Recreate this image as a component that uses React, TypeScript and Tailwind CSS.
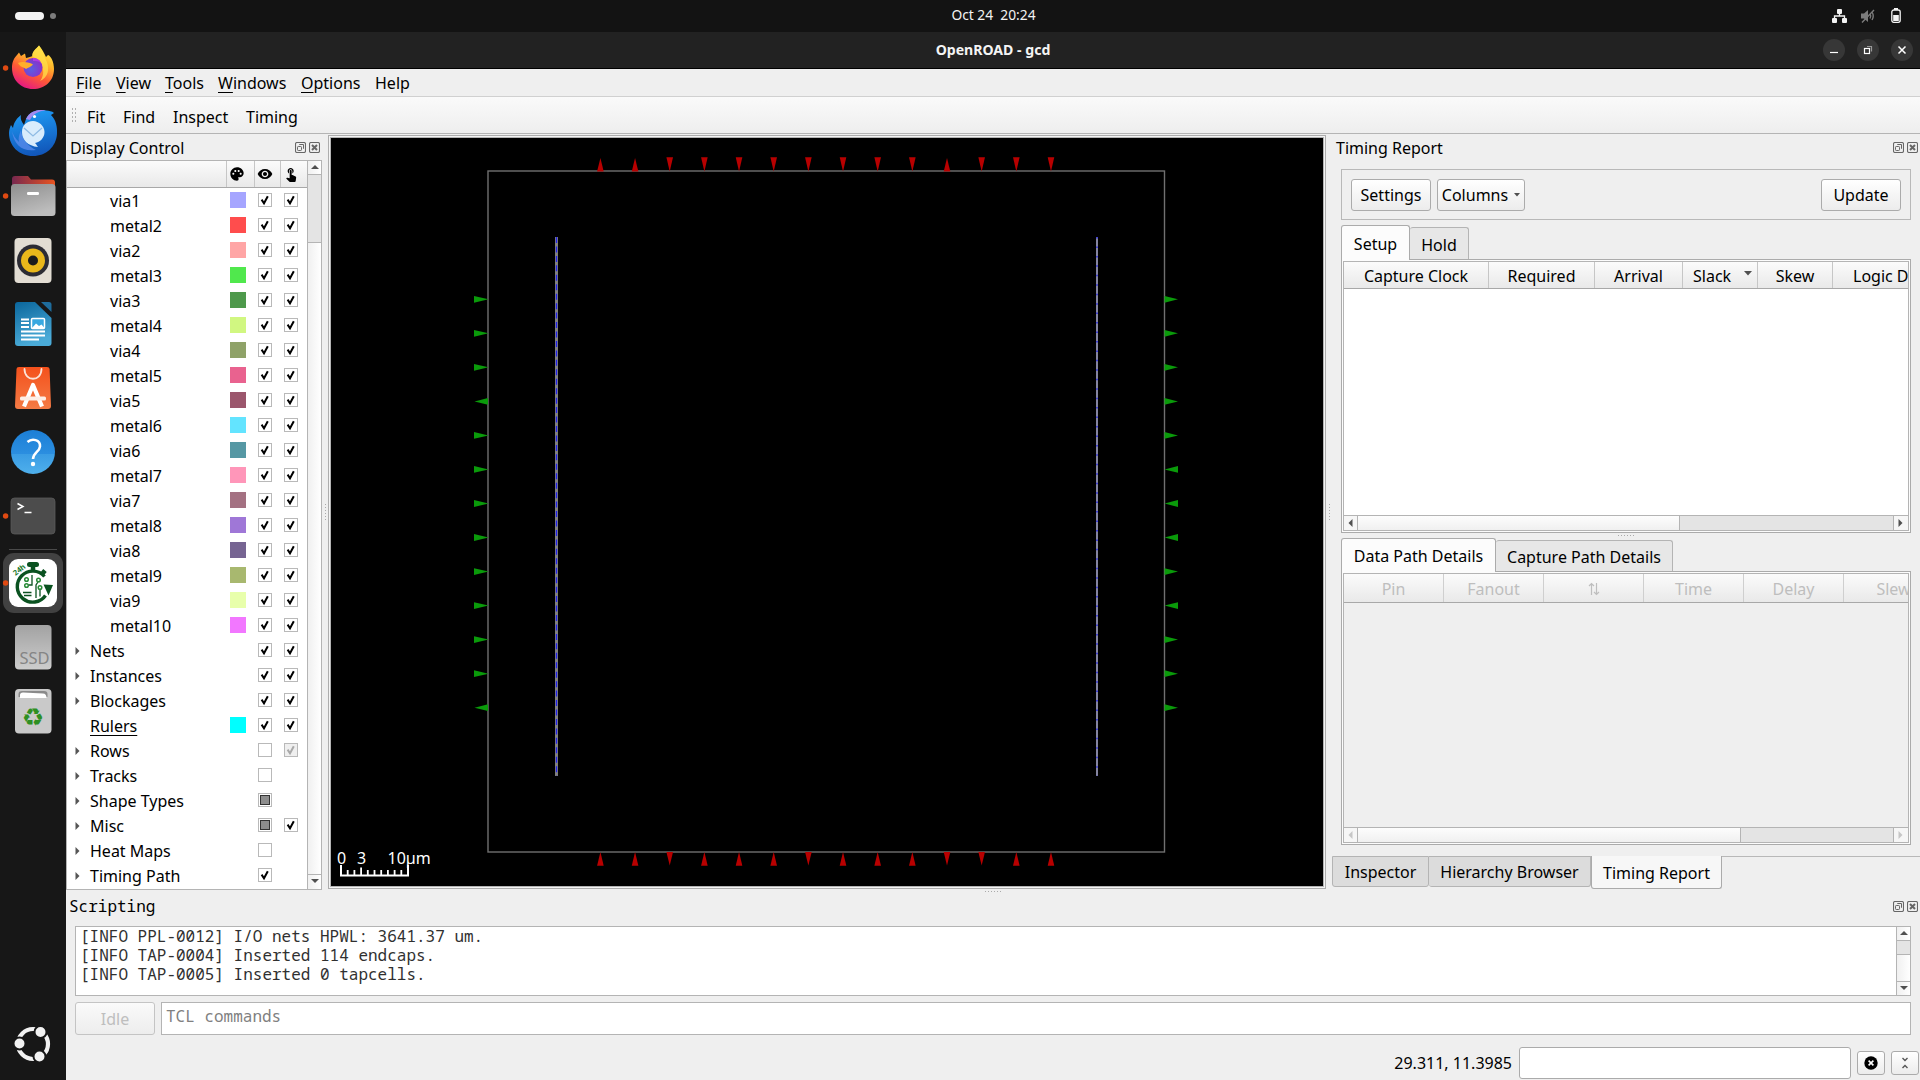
import React from "react";
import { MdPalette, MdVisibility, MdTouchApp } from "react-icons/md";

type CheckState = "on" | "off" | "partial" | "disabled" | "none";

interface TreeRow {
  label: string;
  color?: string;
  child?: boolean;
  arrow?: boolean;
  underline?: boolean;
  visible: CheckState;
  selectable: CheckState;
}

const layer = (label: string, color: string): TreeRow => ({
  label,
  color,
  child: true,
  visible: "on",
  selectable: "on",
});

const group = (label: string, visible: CheckState, selectable: CheckState): TreeRow => ({
  label,
  arrow: true,
  visible,
  selectable,
});

const ROWS: TreeRow[] = [
  layer("via1", "#a5a5ff"),
  layer("metal2", "#ff4d4d"),
  layer("via2", "#ffa5a5"),
  layer("metal3", "#50e84d"),
  layer("via3", "#4e994b"),
  layer("metal4", "#d1f781"),
  layer("via4", "#8fa268"),
  layer("metal5", "#e9628f"),
  layer("via5", "#9b566c"),
  layer("metal6", "#63e4ff"),
  layer("via6", "#5698a4"),
  layer("metal7", "#ff96b9"),
  layer("via7", "#a47182"),
  layer("metal8", "#9f77d7"),
  layer("via8", "#766492"),
  layer("metal9", "#a8b86f"),
  layer("via9", "#e8ffab"),
  layer("metal10", "#f277ff"),
  group("Nets", "on", "on"),
  group("Instances", "on", "on"),
  group("Blockages", "on", "on"),
  { label: "Rulers", color: "#00ffff", underline: true, visible: "on", selectable: "on" },
  group("Rows", "off", "disabled"),
  group("Tracks", "off", "none"),
  group("Shape Types", "partial", "none"),
  group("Misc", "partial", "on"),
  group("Heat Maps", "off", "none"),
  group("Timing Path", "on", "none"),
];

function Check({ state }: { state: CheckState }) {
  if (state === "none") return <div className="size-[14px]" />;
  const disabled = state === "disabled";
  return (
    <div
      className={
        "flex size-[14px] items-center justify-center border border-[#b9b9b9] " +
        (disabled ? "bg-[#efefef]" : "bg-white")
      }
    >
      {state === "partial" && <div className="size-[10px] border border-[#333] bg-[#8d8d8d]" />}
      {(state === "on" || disabled) && (
        <svg width="12" height="12" viewBox="0 0 12 12">
          <path
            d="M2.6 5.6 L5 9.2 L8.8 2.2"
            fill="none"
            stroke={disabled ? "#a9a9a9" : "#000"}
            strokeWidth="2"
          />
        </svg>
      )}
    </div>
  );
}

function Tri({ dir, color = "#505050" }: { dir: "up" | "down" | "left" | "right"; color?: string }) {
  const d = {
    up: "M1 6 L9 6 L5 2 Z",
    down: "M1 3 L9 3 L5 7 Z",
    left: "M6.5 1 L6.5 9 L2.5 5 Z",
    right: "M3.5 1 L3.5 9 L7.5 5 Z",
  }[dir];
  return (
    <svg width="10" height="10" viewBox="0 0 10 10">
      <path d={d} fill={color} />
    </svg>
  );
}

function DockButtons() {
  return (
    <div className="flex gap-[3px]">
      <svg width="11" height="11" viewBox="0 0 11 11" fill="none" stroke="#666">
        <rect x="0.5" y="0.5" width="10" height="10" rx="1.5" strokeWidth="1.1" />
        <rect x="2.5" y="4.5" width="4" height="4" rx="0.8" />
        <path d="M4.5 3 V2.5 H8.5 V6.5 H8" />
      </svg>
      <svg width="11" height="11" viewBox="0 0 11 11" fill="none" stroke="#666">
        <rect x="0.5" y="0.5" width="10" height="10" rx="1.5" strokeWidth="1.1" />
        <path d="M3 3 L8 8 M8 3 L3 8" strokeWidth="2" />
      </svg>
    </div>
  );
}

function PanelTitle({ children, className = "" }: { children: React.ReactNode; className?: string }) {
  return (
    <div className={"flex shrink-0 items-center justify-between whitespace-pre pl-1 pr-[2px] " + className}>
      <span>{children}</span>
      <DockButtons />
    </div>
  );
}

/* ---------- launcher ---------- */

function DockCell({ children, running }: { children: React.ReactNode; running?: boolean }) {
  return (
    <svg className="block shrink-0" width="66" height="64" viewBox="0 0 66 64">
      {children}
      {running && <circle cx="5.6" cy="32" r="2.7" fill="#e04a12" />}
    </svg>
  );
}

function Dock() {
  return (
    <div className="flex w-[66px] shrink-0 flex-col bg-[#171717] pt-1">
      <svg width="0" height="0" className="block">
        <defs>
          <linearGradient id="ff" x1="0.8" y1="0" x2="0.3" y2="1">
            <stop offset="0" stopColor="#fff44f" />
            <stop offset="0.35" stopColor="#ffb52a" />
            <stop offset="0.65" stopColor="#ff5a35" />
            <stop offset="1" stopColor="#e31587" />
          </linearGradient>
          <radialGradient id="ffg" cx="0.4" cy="0.6" r="0.6">
            <stop offset="0" stopColor="#5a5fe0" />
            <stop offset="1" stopColor="#8a30c8" />
          </radialGradient>
          <linearGradient id="tb" x1="0.3" y1="0" x2="0.5" y2="1">
            <stop offset="0" stopColor="#1f9cf5" />
            <stop offset="1" stopColor="#1155b8" />
          </linearGradient>
          <linearGradient id="fl" x1="0" y1="0" x2="1" y2="0">
            <stop offset="0" stopColor="#77284f" />
            <stop offset="1" stopColor="#e95420" />
          </linearGradient>
          <linearGradient id="gr" x1="0" y1="0" x2="0.4" y2="1">
            <stop offset="0" stopColor="#8e8e8e" />
            <stop offset="1" stopColor="#bdbdbd" />
          </linearGradient>
          <linearGradient id="wr" x1="0" y1="0" x2="0.3" y2="1">
            <stop offset="0" stopColor="#0a669c" />
            <stop offset="1" stopColor="#4aabd8" />
          </linearGradient>
          <linearGradient id="st" x1="0" y1="0" x2="0" y2="1">
            <stop offset="0" stopColor="#f4511c" />
            <stop offset="1" stopColor="#f47b45" />
          </linearGradient>
          <linearGradient id="hp" x1="0" y1="0" x2="0" y2="1">
            <stop offset="0" stopColor="#1c7fd6" />
            <stop offset="0.54" stopColor="#2b8ee0" />
            <stop offset="0.55" stopColor="#3a9ce4" />
            <stop offset="1" stopColor="#4fb0ec" />
          </linearGradient>
          <linearGradient id="ds" x1="0" y1="0" x2="0" y2="1">
            <stop offset="0" stopColor="#a2a2a2" />
            <stop offset="1" stopColor="#cdcdcd" />
          </linearGradient>
        </defs>
      </svg>
      <DockCell running>
        <path
          d="M39 9.5 C42 13 44 17 46 21 L48 19 C51 20 54 26 54 33 C54 45 45 53 33 53 C21 53 12 44 12 32 C12 26 14 22 17 19 L19 16.5 L21 20 L25 17.5 L26 22 C29 21 31 21 32.5 20 C32 15 36 13 39 9.5 Z"
          fill="url(#ff)"
        />
        <path d="M32 20 C33 14 37 13 39 9.5 C42 14 44 18 45 22 C51 32 48 42 40 45 C46 38 44 26 32 20 Z" fill="#ffe04a" opacity="0.75" />
        <circle cx="33" cy="31.5" r="9.5" fill="url(#ffg)" />
        <path d="M18 27 C22 25 30 26 33 28.5 C31 31 28 31.500 26 33 C23 31 20 31 18 27 Z" fill="#ffae2b" />
        <path d="M33 22 C37 22 40 24 41 27 C38 25 36 25 33 25 Z" fill="#b03be0" />
      </DockCell>
      <DockCell>
        <path
          d="M26 19 C30 11 38 9 46 10.500 C49 11 52 11 54 13 L51 15 C56 20 57.500 27 57 34 C56 47 46 56 33 56 C19 56 9 46 9 33 C9 30 10 27 11 25 L13 28 C14 22 17 18 21 15 C20 19 22 22 24 25 Z"
          fill="url(#tb)"
        />
        <path d="M12 31 C14 45 22 52 36 50 C28 46 22 40 21 30 C19 35 18 38 19 42 C15 38 13 35 12 31 Z" fill="#5f8ff0" opacity="0.7" />
        <path d="M26 19 C30 11 38 9 46 10.500 C38 11 33 14 30 20 Z" fill="#a58af0" />
        <path d="M22 32 C22 25 27 21 33 21 C39 21 44.500 26 44.500 32 C44.500 38 40 42 35 43 C37 45 37 46 38 47 C28 46 22 40 22 32 Z" fill="#d9ecfc" />
        <path d="M24 28 L33 36 L42 28" fill="none" stroke="#8fbbe4" strokeWidth="1.3" />
        <circle cx="34.500" cy="16.500" r="1.600" fill="#fff" />
      </DockCell>
      <DockCell running>
        <path d="M12 30 V15 Q12 12 15 12 H28 L31 15.500 H52 Q55 15.500 55 18.500 V30 Z" fill="url(#fl)" />
        <rect x="11" y="20" width="44.500" height="32" rx="3.500" fill="url(#gr)" />
        <rect x="27" y="28" width="12" height="3" rx="1.200" fill="#fff" />
      </DockCell>
      <DockCell>
        <rect x="14.500" y="10" width="37" height="45" rx="4" fill="#e2ddd3" />
        <circle cx="33" cy="32.500" r="16" fill="#2c2c34" />
        <circle cx="33" cy="32.500" r="12" fill="#eab81b" />
        <circle cx="33" cy="32.500" r="5" fill="#1c1c1c" />
      </DockCell>
      <DockCell>
        <path d="M18 10 H35 L51.500 26 V51 Q51.500 54 48.500 54 H18 Q15 54 15 51 V13 Q15 10 18 10 Z" fill="url(#wr)" />
        <path d="M41 10 H49 Q51.500 10 51.500 12.500 V20 Z" fill="#1e6c9c" />
        <path d="M21 27.500 H29 M21 31 H29 M21 35 H29 M21 39.500 H45 M21 43.500 H45 M21 47.500 H39" stroke="#fff" strokeWidth="2" />
        <rect x="31.500" y="26.500" width="13" height="10" rx="1" fill="#38a8e0" stroke="#fff" strokeWidth="1.500" />
        <path d="M32 36 L36 31.500 L39 34 L41.500 32.500 L44.500 36 Z" fill="#fff" />
      </DockCell>
      <DockCell>
        <path d="M19 11 H47 Q49.500 11 49.600 13 L51 50 Q51 53 48 53 H18 Q15 53 15 50 L16.500 13 Q16.500 11 19 11 Z" fill="url(#st)" />
        <path d="M24.500 13 C24.500 26 41.500 26 41.500 13" fill="none" stroke="#fbe3d8" strokeWidth="1.800" strokeLinecap="round" />
        <path d="M24 50.500 L33 29 L42 50.500" fill="none" stroke="#fff" strokeWidth="4.200" strokeLinejoin="round" />
        <rect x="20" y="40.500" width="26" height="4" rx="1.500" fill="#fdeee6" />
      </DockCell>
      <DockCell>
        <circle cx="33" cy="32" r="22" fill="url(#hp)" />
        <path d="M27.500 22 C32 18 40.500 19.500 40 26.500 C39.500 32 33.500 32 33 39" fill="none" stroke="#fff" strokeWidth="2.600" />
        <circle cx="33" cy="44" r="2.200" fill="#fff" />
      </DockCell>
      <DockCell running>
        <rect x="11" y="14" width="44" height="36" rx="3.500" fill="#4c4c4c" stroke="#5a5a5a" strokeWidth="0.800" />
        <path d="M17.500 19.500 L23 22.500 L17.500 25.500 M24.500 28.500 H31.500" fill="none" stroke="#fff" strokeWidth="1.500" />
      </DockCell>
      <div className="mx-auto mt-[1px] mb-[1px] h-px w-12 shrink-0 bg-[#4a4a4a]" />
      <DockCell>
        <rect x="3" y="2" width="60" height="60" rx="11" fill="#414141" />
        <rect x="9" y="8" width="48" height="48" rx="9" fill="#fff" />
        <circle cx="5.600" cy="32" r="2.700" fill="#e04a12" />
        <g fill="none" stroke="#0a5220">
          <path d="M45.500 44.500 A15.500 15.500 0 1 1 44.500 25.500" strokeWidth="3.400" />
          <path d="M29.500 13.500 H36.500" strokeWidth="5" strokeLinecap="round" />
          <path d="M33 14 V20 M42.500 22.500 L45 19.500" strokeWidth="4.500" />
          <path d="M23 41.500 H31.500 M24 44.500 H31.500 M32 24 V34 H28.500 M36 47 V34 L38 31 M40 45.500 V38" strokeWidth="1.300" />
        </g>
        <g fill="#fff" stroke="#2a8c38" strokeWidth="1.500">
          <circle cx="26.500" cy="28.500" r="1.800" />
          <circle cx="26.500" cy="34.500" r="1.800" />
          <circle cx="38.500" cy="29" r="1.800" />
          <circle cx="40" cy="36.500" r="1.800" />
        </g>
        <path d="M43.500 33.500 L53 34 L48.500 44.500 Z" fill="#0a5220" />
        <text x="15.500" y="25" transform="rotate(-38 15.500 25)" fontSize="7.500" fontWeight="700" fill="#1d7a2d" fontFamily="Noto Sans">
          24h
        </text>
      </DockCell>
      <DockCell>
        <rect x="15" y="10" width="36.500" height="44.500" rx="4" fill="url(#ds)" />
        <text x="19.500" y="48.500" fontSize="16.500" fill="#858585" fontFamily="Noto Sans">
          SSD
        </text>
      </DockCell>
      <DockCell>
        <rect x="15" y="10" width="36.500" height="44.500" rx="4" fill="#c9c9c9" />
        <path d="M18.500 18 V15 Q18.500 12 22 12 H44 Q47.500 12 47.500 15 V18 Z" fill="#8a8a8a" />
        <path d="M20 19 V16 Q20 13.500 23 13.500 L43 14.500 Q46.500 14.500 46.500 19 Z" fill="#fff" />
        <text x="33" y="46.500" fontSize="25" textAnchor="middle" fill="#2e8f22" fontFamily="DejaVu Sans">
          ♻
        </text>
      </DockCell>
      <div className="flex-1" />
      <svg className="mb-[16px] block shrink-0" width="66" height="40" viewBox="0 0 66 40">
        <circle cx="33" cy="20" r="15" fill="none" stroke="#f2f2f2" strokeWidth="4.200" />
        <g fill="#f2f2f2" stroke="#171717" strokeWidth="2">
          <circle cx="40.500" cy="8" r="6" />
          <circle cx="19.500" cy="19.500" r="6" />
          <circle cx="39.500" cy="32.500" r="6" />
        </g>
      </svg>
    </div>
  );
}

/* ---------- display control ---------- */

function DisplayControl() {
  return (
    <div className="flex w-64 shrink-0 flex-col">
      <PanelTitle className="h-[26px] pt-px">Display Control</PanelTitle>
      <div className="flex flex-1 border border-[#b4b4b4] bg-white">
        <div className="flex w-60 flex-col">
          <div className="flex h-[27px] shrink-0 border-b border-[#a8a8a8] bg-gradient-to-b from-[#fbfbfb] to-[#e9e9e9]">
            <div className="w-[160px] border-r border-[#c6c6c6]" />
            <div className="flex w-[28px] items-center border-r border-[#c6c6c6] pl-[2px]">
              <MdPalette size={16} color="#000" />
            </div>
            <div className="flex w-[26px] items-center border-r border-[#c6c6c6] pl-[2px]">
              <MdVisibility size={16} color="#000" />
            </div>
            <div className="flex flex-1 items-center pl-[2px]">
              <MdTouchApp size={16} color="#000" />
            </div>
          </div>
          {ROWS.map((r) => (
            <div key={r.label} className="flex h-[25px] shrink-0 items-center">
              <div className="flex w-[163px] items-center">
                <div className={r.child ? "w-[43px]" : "flex w-[23px] pl-[5px]"}>
                  {r.arrow && <Tri dir="right" color="#555" />}
                </div>
                <span className={"mt-px leading-5 whitespace-pre " + (r.underline ? "underline underline-offset-[3px]" : "")}>{r.label}</span>
              </div>
              <div className="mb-px size-4" style={{ backgroundColor: r.color }} />
              <div className="mb-[2px] ml-3">
                <Check state={r.visible} />
              </div>
              <div className="mb-[2px] ml-3">
                <Check state={r.selectable} />
              </div>
            </div>
          ))}
        </div>
        <div className="flex w-[14px] flex-col border-l border-[#b4b4b4] bg-gradient-to-r from-[#f0f0f0] to-white">
          <div className="flex h-[14px] items-center justify-center border-b border-[#b4b4b4]">
            <Tri dir="up" />
          </div>
          <div className="h-[68px] border-b border-[#b4b4b4] bg-[#e4e4e4]" />
          <div className="flex-1" />
          <div className="flex h-[15px] items-start justify-center border-t border-[#b4b4b4] pt-px">
            <Tri dir="down" />
          </div>
        </div>
      </div>
    </div>
  );
}

/* ---------- layout canvas ---------- */

const TOP_PINS = "uudddddddduddd";
const BOTTOM_PINS = "uuduuuduuudduu";
const LEFT_PINS = "rrrlrrrrrrrrl";
const RIGHT_PINS = "rrrrrlllrlrrr";

function LayoutView() {
  return (
    <div className="mt-px mb-px flex w-[998px] shrink-0 border border-[#adadad] bg-[#f4f4f4] p-px">
      <svg className="block border border-[#b4b4b4] bg-black" width="994" height="750" viewBox="331 138 992 748">
        <rect x="488" y="171" width="676.500" height="681" fill="none" stroke="#707070" strokeWidth="1.400" />
        {[...TOP_PINS].map((c, i) => {
          const x = 600.4 + i * 34.66;
          const d = c === "u" ? `M${x - 3.3} 171.500 h6.600 L${x} 158 Z` : `M${x - 3.3} 157.300 h6.600 L${x} 171.500 Z`;
          return <path key={i} d={d} fill="#b80000" />;
        })}
        {[...BOTTOM_PINS].map((c, i) => {
          const x = 600.4 + i * 34.66;
          const d = c === "u" ? `M${x - 3.3} 865.800 h6.600 L${x} 852 Z` : `M${x - 3.3} 852 h6.600 L${x} 865.500 Z`;
          return <path key={i} d={d} fill="#b80000" />;
        })}
        {[...LEFT_PINS].map((c, i) => {
          const y = 299.3 + i * 34.03;
          const d = c === "r" ? `M474 ${y - 3.4} v6.800 L488.500 ${y} Z` : `M488 ${y - 3.4} v6.800 L474.500 ${y} Z`;
          return <path key={i} d={d} fill="#0a9a0a" />;
        })}
        {[...RIGHT_PINS].map((c, i) => {
          const y = 299.3 + i * 34.03;
          const d = c === "r" ? `M1164.500 ${y - 3.4} v6.800 L1178 ${y} Z` : `M1178 ${y - 3.4} v6.800 L1164.500 ${y} Z`;
          return <path key={i} d={d} fill="#0a9a0a" />;
        })}
        <path d="M556.500 237 V776" stroke="#808080" strokeWidth="3" />
        <path d="M556.500 237 V776" stroke="#2020e8" strokeWidth="1.300" strokeDasharray="6 3.450" />
        <path d="M1097 237 V776" stroke="#8585a0" strokeWidth="2" />
        <path d="M1097 237 V776" stroke="#4040d0" strokeWidth="2" strokeDasharray="1.500 7.950" />
        <g fill="#fff" fontSize="16" fontFamily="Noto Sans">
          <text x="337" y="864">0</text>
          <text x="357" y="864">3</text>
          <text x="387.500" y="864">10µm</text>
        </g>
        <path d="M341 865 V875.500 H408 V865" fill="none" stroke="#fff" strokeWidth="2" />
        <path
          d="M347.700 870 V875 M354.400 870 V875 M361.100 867.500 V875 M367.800 870 V875 M374.500 870 V875 M381.200 870 V875 M387.900 870 V875 M394.600 870 V875 M401.300 870 V875"
          stroke="#fff"
          strokeWidth="1.800"
        />
      </svg>
    </div>
  );
}

/* ---------- timing report ---------- */

function PushButton({ children, className }: { children: React.ReactNode; className: string }) {
  return (
    <div className={"flex items-center justify-center rounded-[3px] border border-[#ababab] bg-gradient-to-b from-white to-[#ececec] " + className}>
      {children}
    </div>
  );
}

function HScroll({ thumb, disabled }: { thumb: string; disabled?: boolean }) {
  const color = disabled ? "#c6c6c6" : "#505050";
  return (
    <div className="flex h-[15px] shrink-0 border-t border-[#b4b4b4] bg-[#e4e4e4]">
      <div className="flex w-[14px] items-center justify-center border-r border-[#b4b4b4] bg-[#f6f6f6]">
        <Tri dir="left" color={color} />
      </div>
      <div className={"border-r border-[#b4b4b4] bg-gradient-to-b from-[#fdfdfd] to-[#f0f0f0] " + thumb} />
      <div className="flex-1" />
      <div className="flex w-[15px] items-center justify-start border-l border-[#b4b4b4] bg-[#f6f6f6] pl-px">
        <Tri dir="right" color={color} />
      </div>
    </div>
  );
}

const SETUP_COLS: [string, string][] = [
  ["Capture Clock", "w-[145px] justify-center"],
  ["Required", "w-[106px] justify-center"],
  ["Arrival", "w-[88px] justify-center"],
  ["Slack", "w-[75px] pl-[10px]"],
  ["Skew", "w-[75px] justify-center"],
  ["Logic D", "w-[100px] pl-[20px]"],
];

const PATH_COLS = ["Pin", "Fanout", "⇅", "Time", "Delay", "Slew"];

function TimingReport() {
  return (
    <div className="flex w-[588px] shrink-0 flex-col">
      <PanelTitle className="h-[26px] pt-px">Timing Report</PanelTitle>
      <div className="mt-[9px] ml-[9px] flex h-[51px] w-[570px] shrink-0 items-center border border-[#b8b8b8] px-[9px]">
        <PushButton className="h-8 w-20 pt-px">Settings</PushButton>
        <PushButton className="ml-[6px] h-8 w-[88px] gap-[6px] pt-px">
          <span>Columns</span>
          <svg width="6" height="4" viewBox="0 0 6 4">
            <path d="M0 0 H6 L3 3.500 Z" fill="#505050" />
          </svg>
        </PushButton>
        <div className="flex-1" />
        <PushButton className="h-8 w-20 pt-px">Update</PushButton>
      </div>

      <div className="mt-[5px] ml-[9px] flex h-[34px] w-[570px] shrink-0 items-end">
        <div className="relative z-10 -mb-px flex h-[35px] w-[69px] items-center justify-center rounded-t-[3px] border border-b-0 border-[#ababab] bg-[#fcfcfc] pt-px">
          Setup
        </div>
        <div className="flex h-8 w-[59px] items-center justify-center rounded-t-[3px] border border-b-0 border-l-0 border-[#b4b4b4] bg-[#e7e7e7] pt-[2px]">Hold</div>
      </div>
      <div className="ml-[9px] flex h-[274px] w-[570px] shrink-0 border border-[#ababab] bg-[#fcfcfc] p-px">
        <div className="flex w-[566px] flex-col overflow-hidden border border-[#b4b4b4] bg-white">
          <div className="flex h-[27px] shrink-0 overflow-hidden border-b border-[#a8a8a8] bg-gradient-to-b from-[#fbfbfb] to-[#e9e9e9]">
            {SETUP_COLS.map(([t, c]) => (
              <div key={t} className={"flex shrink-0 items-center border-r border-[#c6c6c6] pt-[2px] whitespace-pre " + c}>
                {t}
                {t === "Slack" && (
                  <svg className="mb-[5px] ml-[13px]" width="8" height="5" viewBox="0 0 8 5">
                    <path d="M0 0 H8 L4 4.500 Z" fill="#505050" />
                  </svg>
                )}
              </div>
            ))}
          </div>
          <div className="flex-1" />
          <HScroll thumb="w-[322px]" />
        </div>
      </div>

      <div className="ml-[9px] flex h-[5px] w-[570px] shrink-0 items-center justify-center">
        <div className="h-px w-4 bg-[repeating-linear-gradient(90deg,#aaa_0_1px,transparent_1px_3px)]" />
      </div>

      <div className="ml-[9px] flex h-[33px] w-[570px] shrink-0 items-end">
        <div className="relative z-10 -mb-px flex h-[34px] w-[155px] items-center justify-center rounded-t-[3px] border border-b-0 border-[#ababab] bg-[#fcfcfc] pt-px">
          Data Path Details
        </div>
        <div className="flex h-[31px] w-[177px] items-center justify-center rounded-t-[3px] border border-b-0 border-l-0 border-[#b4b4b4] bg-[#e7e7e7] pt-[2px]">
          Capture Path Details
        </div>
      </div>
      <div className="ml-[9px] flex h-[274px] w-[570px] shrink-0 border border-[#ababab] bg-[#fcfcfc] p-px">
        <div className="flex w-[566px] flex-col overflow-hidden border border-[#b4b4b4] bg-[#efefef]">
          <div className="flex h-[29px] shrink-0 overflow-hidden border-b border-[#a8a8a8] bg-gradient-to-b from-[#fbfbfb] to-[#e9e9e9] text-[#bebebe]">
            {PATH_COLS.map((t) => (
              <div key={t} className="flex w-[100px] shrink-0 items-center justify-center border-r border-[#cfcfcf] pt-[2px]">
                {t === "⇅" ? (
                  <svg width="12" height="14" viewBox="0 0 12 14" fill="none" stroke="#bebebe" strokeWidth="1.200">
                    <path d="M3.500 13 V1.500 M1 4 L3.500 1.500 L6 4 M8.500 1 V12.500 M6 10 L8.500 12.500 L11 10" />
                  </svg>
                ) : (
                  t
                )}
              </div>
            ))}
          </div>
          <div className="flex-1" />
          <HScroll thumb="w-[383px]" disabled />
        </div>
      </div>

      <div className="mt-[11px] flex h-[33px] shrink-0 items-start">
        <div className="flex h-[31px] w-[97px] items-center justify-center rounded-b-[3px] border border-[#b4b4b4] bg-[#dcdcdc]">Inspector</div>
        <div className="flex h-[31px] w-[162px] items-center justify-center rounded-b-[3px] border border-l-0 border-[#b4b4b4] bg-[#dcdcdc]">Hierarchy Browser</div>
        <div className="flex h-[33px] w-[131px] items-center justify-center rounded-b-[3px] border border-t-0 border-[#ababab] bg-[#f7f7f7] pt-px">Timing Report</div>
        <div className="h-px flex-1 bg-[#b8b8b8]" />
      </div>
    </div>
  );
}

/* ---------- scripting + status ---------- */

function Scripting() {
  return (
    <div className="flex flex-1 flex-col">
      <PanelTitle className="mt-[4px] h-[24px] pl-[3px] font-['Noto_Sans_Mono','DejaVu_Sans_Mono',monospace]">Scripting</PanelTitle>
      <div className="mt-[8px] ml-[9px] flex h-[70px] w-[1836px] border border-[#b4b4b4] bg-white">
        <div className="flex-1 pl-1 font-['Noto_Sans_Mono','DejaVu_Sans_Mono',monospace] leading-[19px] text-[#303030]">
          <div>[INFO PPL-0012] I/O nets HPWL: 3641.37 um.</div>
          <div>[INFO TAP-0004] Inserted 114 endcaps.</div>
          <div>[INFO TAP-0005] Inserted 0 tapcells.</div>
        </div>
        <div className="flex w-[14px] flex-col border-l border-[#b4b4b4] bg-gradient-to-r from-[#f0f0f0] to-white">
          <div className="flex h-[14px] items-center justify-center border-b border-[#b4b4b4]">
            <Tri dir="up" />
          </div>
          <div className="h-[14px] border-b border-[#b4b4b4] bg-[#e4e4e4]" />
          <div className="flex-1" />
          <div className="flex h-[14px] items-start justify-center border-t border-[#b4b4b4] pt-px">
            <Tri dir="down" />
          </div>
        </div>
      </div>
      <div className="mt-[6px] ml-[9px] flex h-[33px] gap-[6px]">
        <div className="flex w-20 items-center justify-center rounded-[3px] border border-[#c4c4c4] bg-gradient-to-b from-[#fafafa] to-[#ededed] pt-px text-[#bebebe]">Idle</div>
        <div className="w-[1750px] border border-[#b4b4b4] bg-white pt-[2px] pl-1 font-['Noto_Sans_Mono','DejaVu_Sans_Mono',monospace] text-[#808080]">
          TCL commands
        </div>
      </div>
      <div className="mt-3 flex h-8 items-center justify-end pr-px">
        <span className="mr-[7px] pb-px">29.311, 11.3985</span>
        <div className="h-8 w-[332px] rounded-[3px] border border-[#ababab] bg-white" />
        <PushButton className="mb-px ml-[6px] h-6 w-7">
          <svg width="14" height="14" viewBox="0 0 14 14">
            <circle cx="7" cy="7" r="6.700" fill="#000" />
            <path d="M4.600 4.600 L9.400 9.400 M9.400 4.600 L4.600 9.400" stroke="#fff" strokeWidth="1.600" />
          </svg>
        </PushButton>
        <PushButton className="mb-px ml-[6px] h-6 w-7">
          <svg width="8" height="12" viewBox="0 0 8 12" fill="none" stroke="#555" strokeWidth="1.400">
            <path d="M1.500 1 L4 3.500 L6.500 1 M1.500 11 L4 8.500 L6.500 11" />
          </svg>
        </PushButton>
      </div>
    </div>
  );
}

const MENUS: [string, string][] = [
  ["File", "w-10"],
  ["View", "w-[49px]"],
  ["Tools", "w-[53px]"],
  ["Windows", "w-[83px]"],
  ["Options", "w-[74px]"],
];

export default function App() {
  return (
    <div className="flex h-[1080px] w-[1920px] flex-col overflow-hidden bg-[#efefef] font-['Noto_Sans',sans-serif] text-[16px] leading-[22px] text-black">
      <div className="grid h-8 shrink-0 grid-cols-[1fr_auto_1fr] items-center bg-[#131313] text-[13.8px] text-[#f2f2f2]">
        <div className="flex items-center gap-[6px] pl-[15px]">
          <div className="h-2 w-[29px] rounded-full bg-[#f4f4f4]" />
          <div className="size-[6px] rounded-full bg-[#7d7d7d]" />
        </div>
        <div className="mb-[2px] ml-[67px] whitespace-pre">Oct 24  20:24</div>
        <div className="flex items-center justify-end pr-[19px]">
          <svg width="16" height="14" viewBox="0 0 16 14" fill="#f4f4f4">
            <rect x="5" y="0" width="5" height="5" rx="1" />
            <rect x="0" y="9" width="5" height="5" rx="1" />
            <rect x="10" y="9" width="5" height="5" rx="1" />
            <path d="M2.500 9.500 V7 H12.500 V9.500 M7.500 4 V7" fill="none" stroke="#f4f4f4" strokeWidth="1.300" />
          </svg>
          <svg className="ml-[13px]" width="15" height="14" viewBox="0 0 15 14" fill="none" stroke="#7c7c7c" strokeWidth="1.400">
            <path d="M0 4.500 H3 L7 1 V13 L3 9.500 H0 Z" fill="#7c7c7c" stroke="none" />
            <path d="M9 4.500 Q10.500 7 9 9.500 M11 3 Q13.500 7 11 11 M13 1 L1 13.500" />
          </svg>
          <svg className="mb-px ml-[15px]" width="10" height="15" viewBox="0 0 10 15">
            <rect x="0.800" y="2" width="8.400" height="12.300" rx="2" fill="none" stroke="#f4f4f4" strokeWidth="1.300" />
            <rect x="3" y="0" width="4" height="2" fill="#f4f4f4" />
            <rect x="2.200" y="7" width="5.600" height="6" fill="#f4f4f4" />
          </svg>
        </div>
      </div>
      <div className="flex flex-1">
        <Dock />
        <div className="flex flex-1 flex-col">
          <div className="grid h-[37px] shrink-0 grid-cols-[1fr_auto_1fr] items-center border-b border-black bg-[#222] text-[#f4f4f4]">
            <div />
            <div className="mb-px text-[14.1px] font-bold">OpenROAD - gcd</div>
            <div className="flex justify-end gap-3 pr-[7px]">
              {["min", "max", "close"].map((k) => (
                <div key={k} className="flex size-[22px] items-center justify-center rounded-full bg-[#373737]">
                  <svg width="10" height="10" viewBox="0 0 10 10" fill="none" stroke="#fff" strokeWidth="1.200">
                    {k === "min" && <path d="M1 7.500 H9" />}
                    {k === "max" && (
                      <>
                        <rect x="1.500" y="3.500" width="5" height="5" />
                        <path d="M4 1.500 H8.500 V6.500" stroke="#999" />
                      </>
                    )}
                    {k === "close" && <path d="M1.500 1.500 L8.500 8.500 M8.500 1.500 L1.500 8.500" strokeWidth="1.500" />}
                  </svg>
                </div>
              ))}
            </div>
          </div>
          <div className="flex h-7 shrink-0 items-center border-b border-[#d0d0d0] pl-[10px]">
            {MENUS.map(([m, w]) => (
              <div key={m} className={w}>
                <span className="underline underline-offset-[3px]">{m[0]}</span>
                {m.slice(1)}
              </div>
            ))}
            <div>Help</div>
          </div>
          <div className="flex h-[37px] shrink-0 items-center border-b border-[#b4b4b4] bg-gradient-to-b from-[#fafafa] to-[#eeeeee] pl-[5px] pt-[3px]">
            <div className="mb-[3px] h-4 w-[5px] bg-[radial-gradient(#b0b0b0_0.7px,transparent_0.8px)] bg-[length:3px_4px]" />
            <div className="ml-[11px] w-9">Fit</div>
            <div className="w-[50px]">Find</div>
            <div className="w-[73px]">Inspect</div>
            <div>Timing</div>
          </div>
          <div className="flex h-[756px] shrink-0">
            <DisplayControl />
            <div className="flex w-[6px] shrink-0 items-center justify-center">
              <div className="h-4 w-px bg-[repeating-linear-gradient(180deg,#aaa_0_1px,transparent_1px_3px)]" />
            </div>
            <LayoutView />
            <div className="flex w-[6px] shrink-0 items-center justify-center">
              <div className="h-4 w-px bg-[repeating-linear-gradient(180deg,#aaa_0_1px,transparent_1px_3px)]" />
            </div>
            <TimingReport />
          </div>
          <div className="-mb-[3px] flex h-[3px] shrink-0 items-center justify-center">
            <div className="h-px w-4 bg-[repeating-linear-gradient(90deg,#aaa_0_1px,transparent_1px_3px)]" />
          </div>
          <Scripting />
        </div>
      </div>
    </div>
  );
}
